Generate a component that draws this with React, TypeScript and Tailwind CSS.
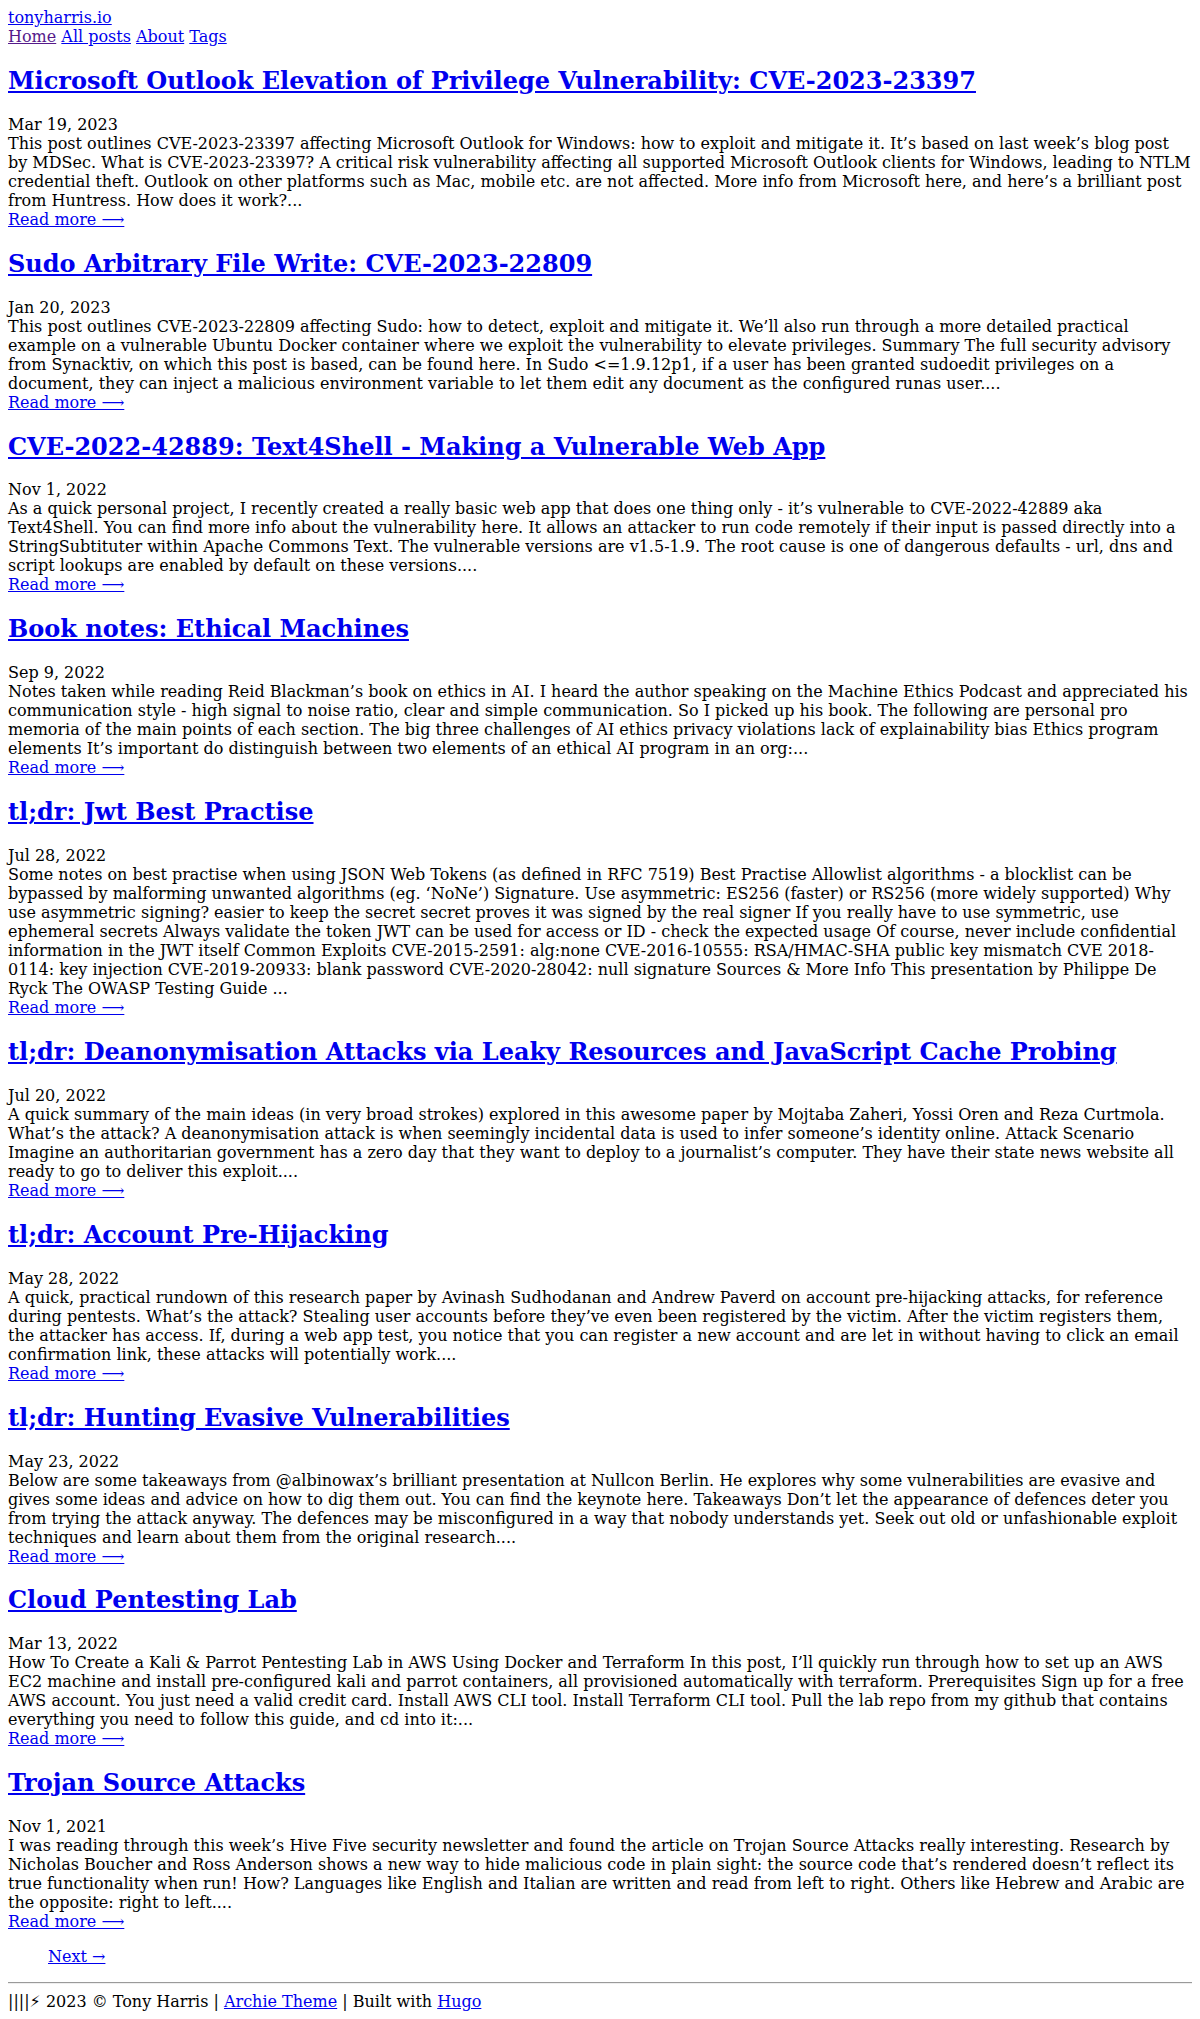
import React from "react";

type Post = { title: string; date: string; summary: string };

const posts: Post[] = [
  {
    title: "Microsoft Outlook Elevation of Privilege Vulnerability: CVE-2023-23397",
    date: "Mar 19, 2023",
    summary:
      "This post outlines CVE-2023-23397 affecting Microsoft Outlook for Windows: how to exploit and mitigate it. It’s based on last week’s blog post by MDSec. What is CVE-2023-23397? A critical risk vulnerability affecting all supported Microsoft Outlook clients for Windows, leading to NTLM credential theft. Outlook on other platforms such as Mac, mobile etc. are not affected. More info from Microsoft here, and here’s a brilliant post from Huntress. How does it work?...",
  },
  {
    title: "Sudo Arbitrary File Write: CVE-2023-22809",
    date: "Jan 20, 2023",
    summary:
      "This post outlines CVE-2023-22809 affecting Sudo: how to detect, exploit and mitigate it. We’ll also run through a more detailed practical example on a vulnerable Ubuntu Docker container where we exploit the vulnerability to elevate privileges. Summary The full security advisory from Synacktiv, on which this post is based, can be found here. In Sudo <=1.9.12p1, if a user has been granted sudoedit privileges on a document, they can inject a malicious environment variable to let them edit any document as the configured runas user....",
  },
  {
    title: "CVE-2022-42889: Text4Shell - Making a Vulnerable Web App",
    date: "Nov 1, 2022",
    summary:
      "As a quick personal project, I recently created a really basic web app that does one thing only - it’s vulnerable to CVE-2022-42889 aka Text4Shell. You can find more info about the vulnerability here. It allows an attacker to run code remotely if their input is passed directly into a StringSubtituter within Apache Commons Text. The vulnerable versions are v1.5-1.9. The root cause is one of dangerous defaults - url, dns and script lookups are enabled by default on these versions....",
  },
  {
    title: "Book notes: Ethical Machines",
    date: "Sep 9, 2022",
    summary:
      "Notes taken while reading Reid Blackman’s book on ethics in AI. I heard the author speaking on the Machine Ethics Podcast and appreciated his communication style - high signal to noise ratio, clear and simple communication. So I picked up his book. The following are personal pro memoria of the main points of each section. The big three challenges of AI ethics privacy violations lack of explainability bias Ethics program elements It’s important do distinguish between two elements of an ethical AI program in an org:...",
  },
  {
    title: "tl;dr: Jwt Best Practise",
    date: "Jul 28, 2022",
    summary:
      "Some notes on best practise when using JSON Web Tokens (as defined in RFC 7519) Best Practise Allowlist algorithms - a blocklist can be bypassed by malforming unwanted algorithms (eg. ‘NoNe’) Signature. Use asymmetric: ES256 (faster) or RS256 (more widely supported) Why use asymmetric signing? easier to keep the secret secret proves it was signed by the real signer If you really have to use symmetric, use ephemeral secrets Always validate the token JWT can be used for access or ID - check the expected usage Of course, never include confidential information in the JWT itself Common Exploits CVE-2015-2591: alg:none CVE-2016-10555: RSA/HMAC-SHA public key mismatch CVE 2018-0114: key injection CVE-2019-20933: blank password CVE-2020-28042: null signature Sources & More Info This presentation by Philippe De Ryck The OWASP Testing Guide ...",
  },
  {
    title: "tl;dr: Deanonymisation Attacks via Leaky Resources and JavaScript Cache Probing",
    date: "Jul 20, 2022",
    summary:
      "A quick summary of the main ideas (in very broad strokes) explored in this awesome paper by Mojtaba Zaheri, Yossi Oren and Reza Curtmola. What’s the attack? A deanonymisation attack is when seemingly incidental data is used to infer someone’s identity online. Attack Scenario Imagine an authoritarian government has a zero day that they want to deploy to a journalist’s computer. They have their state news website all ready to go to deliver this exploit....",
  },
  {
    title: "tl;dr: Account Pre-Hijacking",
    date: "May 28, 2022",
    summary:
      "A quick, practical rundown of this research paper by Avinash Sudhodanan and Andrew Paverd on account pre-hijacking attacks, for reference during pentests. What’s the attack? Stealing user accounts before they’ve even been registered by the victim. After the victim registers them, the attacker has access. If, during a web app test, you notice that you can register a new account and are let in without having to click an email confirmation link, these attacks will potentially work....",
  },
  {
    title: "tl;dr: Hunting Evasive Vulnerabilities",
    date: "May 23, 2022",
    summary:
      "Below are some takeaways from @albinowax’s brilliant presentation at Nullcon Berlin. He explores why some vulnerabilities are evasive and gives some ideas and advice on how to dig them out. You can find the keynote here. Takeaways Don’t let the appearance of defences deter you from trying the attack anyway. The defences may be misconfigured in a way that nobody understands yet. Seek out old or unfashionable exploit techniques and learn about them from the original research....",
  },
  {
    title: "Cloud Pentesting Lab",
    date: "Mar 13, 2022",
    summary:
      "How To Create a Kali & Parrot Pentesting Lab in AWS Using Docker and Terraform In this post, I’ll quickly run through how to set up an AWS EC2 machine and install pre-configured kali and parrot containers, all provisioned automatically with terraform. Prerequisites Sign up for a free AWS account. You just need a valid credit card. Install AWS CLI tool. Install Terraform CLI tool. Pull the lab repo from my github that contains everything you need to follow this guide, and cd into it:...",
  },
  {
    title: "Trojan Source Attacks",
    date: "Nov 1, 2021",
    summary:
      "I was reading through this week’s Hive Five security newsletter and found the article on Trojan Source Attacks really interesting. Research by Nicholas Boucher and Ross Anderson shows a new way to hide malicious code in plain sight: the source code that’s rendered doesn’t reflect its true functionality when run! How? Languages like English and Italian are written and read from left to right. Others like Hebrew and Arabic are the opposite: right to left....",
  },
];

const link = "text-[#0000ee] underline";

export default function App() {
  return (
    <div className="p-2 font-['DejaVu_Serif',serif] text-base leading-[normal] text-black bg-white">
      <header>
        <div>
          <a href="#" className={link}>
            tonyharris.io
          </a>
        </div>
        <nav>
          <a href="#" className="text-[#551a8b] underline">
            Home
          </a>{" "}
          <a href="#" className={link}>
            All posts
          </a>{" "}
          <a href="#" className={link}>
            About
          </a>{" "}
          <a href="#" className={link}>
            Tags
          </a>
        </nav>
      </header>
      <main>
        <div>
          {posts.map((p) => (
            <section key={p.title}>
              <h1 className="text-2xl leading-[normal] font-bold my-[0.83em]">
                <a href="#" className={link}>
                  {p.title}
                </a>
              </h1>
              <time>{p.date}</time>
              <br />
              <div>{p.summary}</div>
              <a href="#" className={link}>
                Read more ⟶
              </a>
            </section>
          ))}
        </div>
        <ul className="pl-10 my-4 list-none">
          <span>
            <a href="#" className={link}>
              Next →
            </a>
          </span>
        </ul>
      </main>
      <footer>
        <hr className="h-0 my-2 border-0 border-t border-b border-t-[#9a9a9a] border-b-[#eeeeee]" />
        ||||<span className="font-['DejaVu_Sans',sans-serif]">{"\u26A1\uFE0E"}</span> 2023 © Tony Harris |{" "}
        <a href="#" className={link}>
          Archie Theme
        </a>{" "}
        | Built with{" "}
        <a href="#" className={link}>
          Hugo
        </a>
      </footer>
    </div>
  );
}
